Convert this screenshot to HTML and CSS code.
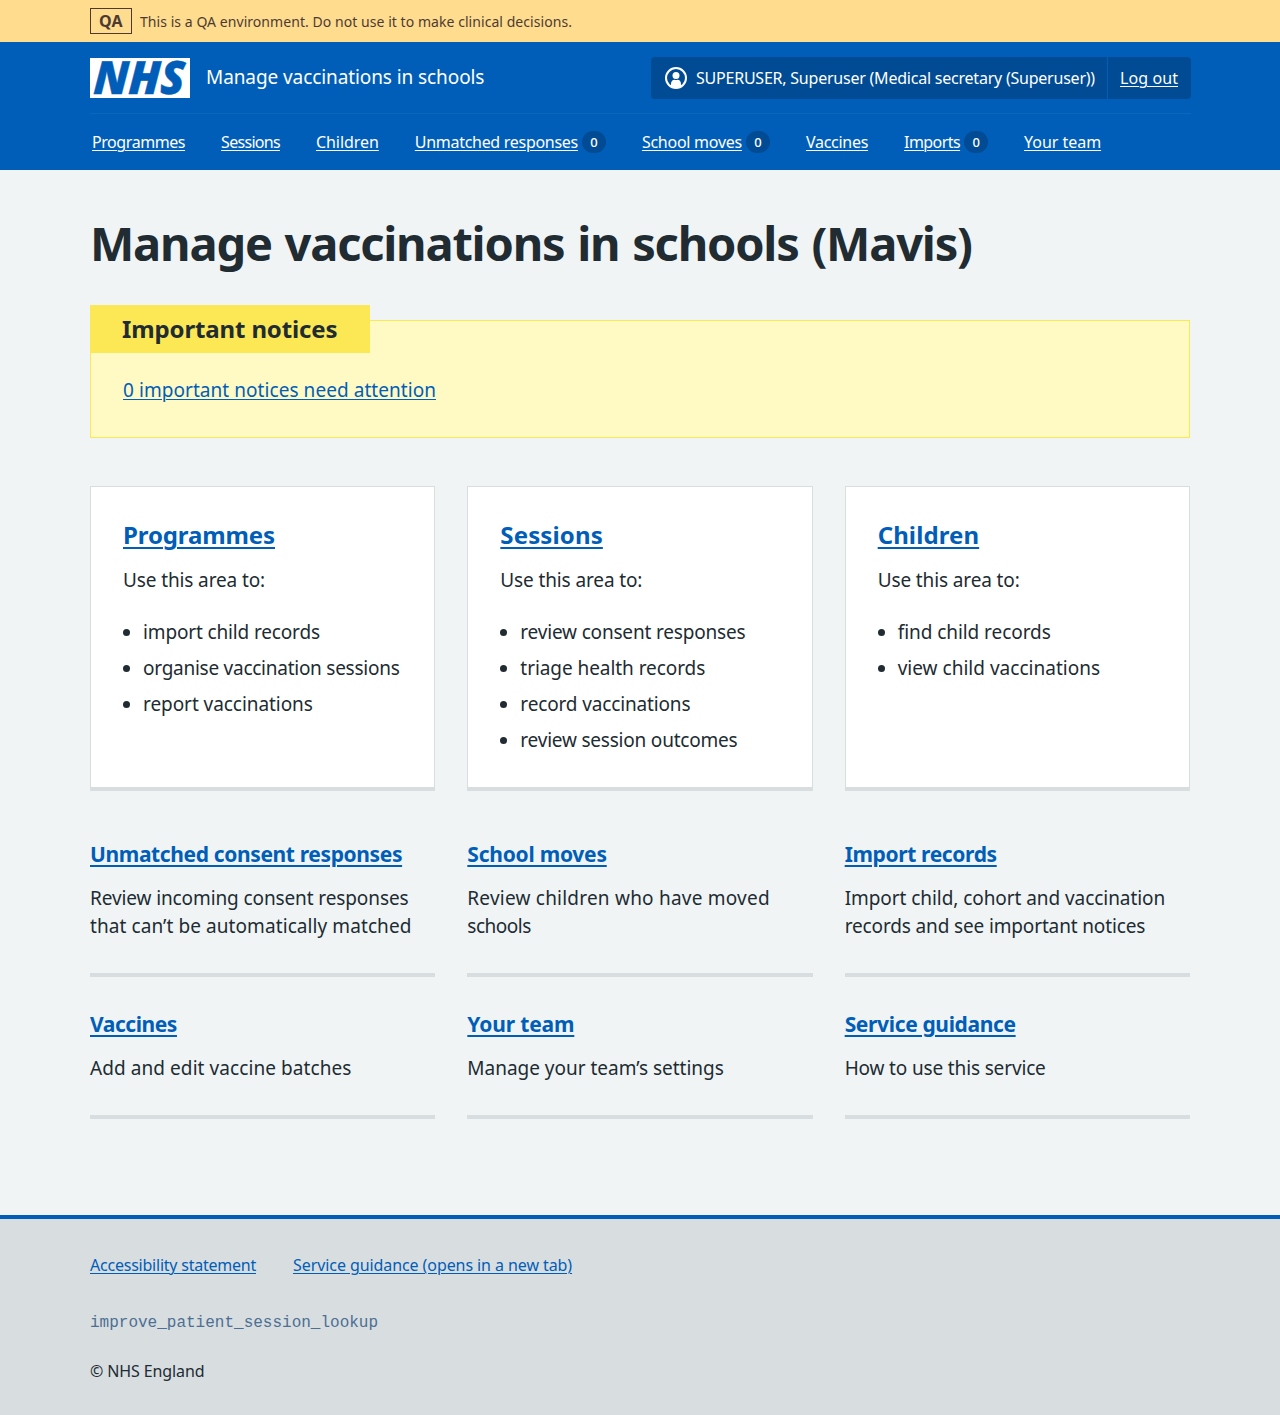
FILE: index.html
```html
<!DOCTYPE html>
<html lang="en">
<head>
<meta charset="utf-8">
<title>Manage vaccinations in schools (Mavis)</title>
<link rel="stylesheet" href="styles.css">
</head>
<body>
<div class="environment">
  <div class="container environment-row">
    <strong class="tag">QA</strong>
    <span>This is a QA environment. Do not use it to make clinical decisions.</span>
  </div>
</div>

<header class="header">
  <div class="container">
    <div class="header-top">
      <a class="brand" href="#">
        <svg class="logo" viewBox="0 0 100 40" width="100" height="40" role="img" aria-label="NHS">
          <rect width="100" height="40" fill="#fff"/>
          <text class="logo-text" transform="translate(3 36) skewX(-3)" textLength="91" lengthAdjust="spacingAndGlyphs">NHS</text>
        </svg>
        <span class="service-name">Manage vaccinations in schools</span>
      </a>
      <div class="account">
        <div class="account-user">
          <svg width="22" height="22" viewBox="0 0 22 22" aria-hidden="true">
            <defs><clipPath id="disc"><circle cx="11" cy="11" r="10"/></clipPath></defs>
            <circle cx="11" cy="11" r="10" fill="none" stroke="#fff" stroke-width="2"/>
            <circle cx="11" cy="8.4" r="3.5" fill="#fff"/>
            <path clip-path="url(#disc)" d="M6 22v-5c0-2.800 1.600-4.300 3.600-4.300.900.500 1.900.500 2.800 0 2 0 3.600 1.500 3.600 4.300v5z" fill="#fff"/>
          </svg>
          <span class="user-name">SUPERUSER, Superuser (Medical secretary (Superuser))</span>
        </div>
        <a class="logout" href="#">Log out</a>
      </div>
    </div>
    <nav class="nav">
      <div class="nav-item"><a class="nav-programmes" href="#">Programmes</a></div>
      <div class="nav-item"><a class="nav-sessions" href="#">Sessions</a></div>
      <div class="nav-item"><a class="nav-children" href="#">Children</a></div>
      <div class="nav-item"><a class="nav-unmatched" href="#">Unmatched responses</a><span class="count">0</span></div>
      <div class="nav-item"><a class="nav-moves" href="#">School moves</a><span class="count">0</span></div>
      <div class="nav-item"><a class="nav-vaccines" href="#">Vaccines</a></div>
      <div class="nav-item"><a class="nav-imports" href="#">Imports</a><span class="count">0</span></div>
      <div class="nav-item"><a class="nav-team" href="#">Your team</a></div>
    </nav>
  </div>
</header>

<main class="container main">
  <h1>Manage vaccinations in schools (Mavis)</h1>

  <section class="warning">
    <h2 class="warning-label">Important notices</h2>
    <p><a class="notices-link" href="#">0 important notices need attention</a></p>
  </section>

  <div class="grid">
    <section class="card">
      <h2><a class="card-programmes" href="#">Programmes</a></h2>
      <p>Use this area to:</p>
      <ul>
        <li class="import">import child records</li>
        <li class="organise">organise vaccination sessions</li>
        <li>report vaccinations</li>
      </ul>
    </section>
    <section class="card">
      <h2><a class="card-sessions" href="#">Sessions</a></h2>
      <p>Use this area to:</p>
      <ul>
        <li class="review">review consent responses</li>
        <li>triage health records</li>
        <li class="import">record vaccinations</li>
        <li class="outcomes">review session outcomes</li>
      </ul>
    </section>
    <section class="card">
      <h2><a class="card-children" href="#">Children</a></h2>
      <p>Use this area to:</p>
      <ul>
        <li>find child records</li>
        <li class="view">view child vaccinations</li>
      </ul>
    </section>
  </div>

  <div class="grid links">
    <section class="link-block">
      <h2><a href="#">Unmatched consent responses</a></h2>
      <p><span class="unmatched-first">Review incoming consent responses</span> <span class="unmatched-second">that can’t be automatically matched</span></p>
    </section>
    <section class="link-block">
      <h2><a class="link-moves" href="#">School moves</a></h2>
      <p class="moves-text">Review children who have moved <span class="moves-second">schools</span></p>
    </section>
    <section class="link-block">
      <h2><a href="#">Import records</a></h2>
      <p class="import-text">Import child, cohort and vaccination <span class="import-second">records and see important notices</span></p>
    </section>
    <section class="link-block">
      <h2><a class="link-vaccines" href="#">Vaccines</a></h2>
      <p class="vaccines-text">Add and edit vaccine batches</p>
    </section>
    <section class="link-block">
      <h2><a class="link-team" href="#">Your team</a></h2>
      <p>Manage your team’s settings</p>
    </section>
    <section class="link-block">
      <h2><a class="link-guidance" href="#">Service guidance</a></h2>
      <p class="guidance-text">How to use this service</p>
    </section>
  </div>
</main>

<footer class="footer">
  <div class="container">
    <div class="footer-links">
      <a class="footer-accessibility" href="#">Accessibility statement</a>
      <a class="footer-guidance" href="#">Service guidance (opens in a new tab)</a>
    </div>
    <p class="version">improve_patient_session_lookup</p>
    <p class="copyright">© NHS England</p>
  </div>
</footer>
</body>
</html>
```
FILE: styles.css
```css
* { box-sizing: border-box; }

body {
  margin: 0;
  background: #f0f4f5;
  color: #212b32;
  font: 19px/28px "Noto Sans", "Open Sans", sans-serif;
}

h1, h2, p, ul { margin: 0; }
a { color: #005eb8; text-decoration-thickness: 1px; text-underline-offset: 2px; }

.container { width: 1100px; margin: 0 auto; }

/* Environment banner */
.environment { background: #ffdc8e; color: #4d3b33; }
.environment-row {
  display: flex;
  align-items: center;
  gap: 8px;
  height: 42px;
  font-size: 14px;
  line-height: 24px;
  letter-spacing: 0.055px;
}
.environment-row span { padding-top: 2px; }
.tag {
  width: 42px;
  height: 26px;
  border: 1px solid #4d3b33;
  text-align: center;
  font-size: 16px;
  line-height: 25px;
  letter-spacing: 0.3px;
}

/* Header */
.header { height: 128px; background: #005eb8; color: #fff; }
.header a { color: #fff; }
.header-top {
  display: flex;
  justify-content: space-between;
  align-items: center;
  height: 72px;
  margin-right: -1px;
  border-bottom: 1px solid #0b66bd;
}
.header .brand { display: flex; align-items: center; gap: 16px; text-decoration: none; }
.logo { display: block; overflow: visible; }
.logo-text {
  font: italic 800 46px "Open Sans", sans-serif;
  fill: #005eb8;
  stroke: #005eb8;
  stroke-width: 0.4px;
}
.service-name { padding-bottom: 1px; letter-spacing: -0.09px; }
.account {
  display: flex;
  height: 42px;
  border-radius: 4px;
  background: #004b93;
  font-size: 16px;
  line-height: 24px;
}
.account-user {
  display: flex;
  align-items: center;
  gap: 9px;
  width: 457px;
  padding-left: 14px;
  border-right: 1px solid #005eb8;
  white-space: nowrap;
}
.user-name { letter-spacing: -0.225px; }
.logout { width: 83px; padding: 9px 0 0 12px; letter-spacing: 0.085px; }

.nav {
  display: flex;
  align-items: center;
  gap: 36px;
  height: 56px;
  padding-left: 2px;
  font-size: 16px;
  line-height: 24px;
}
.nav-item { display: flex; align-items: center; gap: 4px; white-space: nowrap; }
.nav-programmes { letter-spacing: -0.43px; }
.nav-sessions { letter-spacing: -0.7px; }
.nav-children { letter-spacing: -0.06px; }
.nav-unmatched { letter-spacing: -0.29px; }
.nav-moves { letter-spacing: -0.26px; }
.nav-vaccines { letter-spacing: -0.28px; }
.nav-imports { letter-spacing: -0.56px; }
.nav-team { letter-spacing: -0.036px; }
.count {
  width: 24px;
  height: 22px;
  border-radius: 12px;
  background: #004b93;
  text-align: center;
  font-size: 13px;
  font-weight: 500;
  line-height: 23px;
}

/* Main */
.main { height: 1045px; padding-top: 46px; }
h1 { font-size: 47px; line-height: 54px; letter-spacing: -1.2px; word-spacing: 1.8px; }

.warning {
  height: 118px;
  margin-top: 50px;
  padding: 0 32px;
  border: 1px solid #fbe854;
  background: #fff9c4;
}
.warning-label {
  width: 280px;
  height: 48px;
  margin: -16px 0 23px -33px;
  padding: 8px 0 0 32px;
  background: #fbe854;
  font-size: 24px;
  line-height: 32px;
  letter-spacing: -0.13px;
}
.notices-link { letter-spacing: 0.057px; }

.grid { display: grid; grid-template-columns: repeat(3, 1fr); column-gap: 32px; }
.grid h2 a { text-decoration-thickness: 2px; text-underline-offset: 3px; }

.card {
  height: 305px;
  margin-top: 48px;
  padding: 32px 32px 0;
  border: 1px solid #d8dde0;
  border-bottom-width: 4px;
  background: #fff;
}
.card h2 { margin-bottom: 15px; font-size: 24px; line-height: 32px; }
.card p { margin-bottom: 24px; letter-spacing: -0.122px; }
.card-programmes { letter-spacing: -0.112px; }
.card-sessions { letter-spacing: 0.129px; }
.card-children { letter-spacing: 0.103px; }
ul { padding-left: 20px; }
li { margin-bottom: 8px; letter-spacing: -0.06px; }
.import { letter-spacing: -0.145px; }
.organise { letter-spacing: -0.257px; white-space: nowrap; }
.review { letter-spacing: -0.18px; }
.outcomes { letter-spacing: -0.21px; }
.view { letter-spacing: 0.021px; }

.links { margin-top: 15px; }
.link-block {
  padding: 33px 0;
  border-bottom: 4px solid #d8dde0;
}
.link-block:nth-child(n+4) { padding-top: 32px; }
.link-block h2 { margin-bottom: 15px; font-size: 21px; line-height: 30px; letter-spacing: -0.37px; white-space: nowrap; }
.link-block .link-moves { letter-spacing: -0.24px; }
.link-block .link-vaccines { letter-spacing: -0.44px; }
.link-block .link-team { letter-spacing: -0.16px; }
.link-block .link-guidance { letter-spacing: -0.355px; }
.link-block p { letter-spacing: -0.016px; }
.link-block .moves-text { letter-spacing: 0.22px; }
.moves-second { letter-spacing: -0.5px; }
.link-block .vaccines-text { letter-spacing: 0.075px; }
.link-block .guidance-text { letter-spacing: -0.15px; }
.link-block .import-text { letter-spacing: -0.064px; }
.import-second { letter-spacing: -0.14px; }
.unmatched-first { letter-spacing: -0.108px; }
.unmatched-second { letter-spacing: 0.084px; }

/* Footer */
.footer {
  height: 200px;
  padding-top: 34px;
  border-top: 4px solid #005eb8;
  background: #d8dde0;
  font-size: 16px;
  line-height: 24px;
}
.footer-links { display: flex; gap: 37px; }
.footer-accessibility { letter-spacing: -0.228px; }
.footer-guidance { letter-spacing: -0.082px; }
.version {
  margin-top: 34px;
  color: #4c6f93;
  font-family: "Liberation Mono", monospace;
}
.copyright { margin-top: 24px; letter-spacing: -0.107px; }
```
